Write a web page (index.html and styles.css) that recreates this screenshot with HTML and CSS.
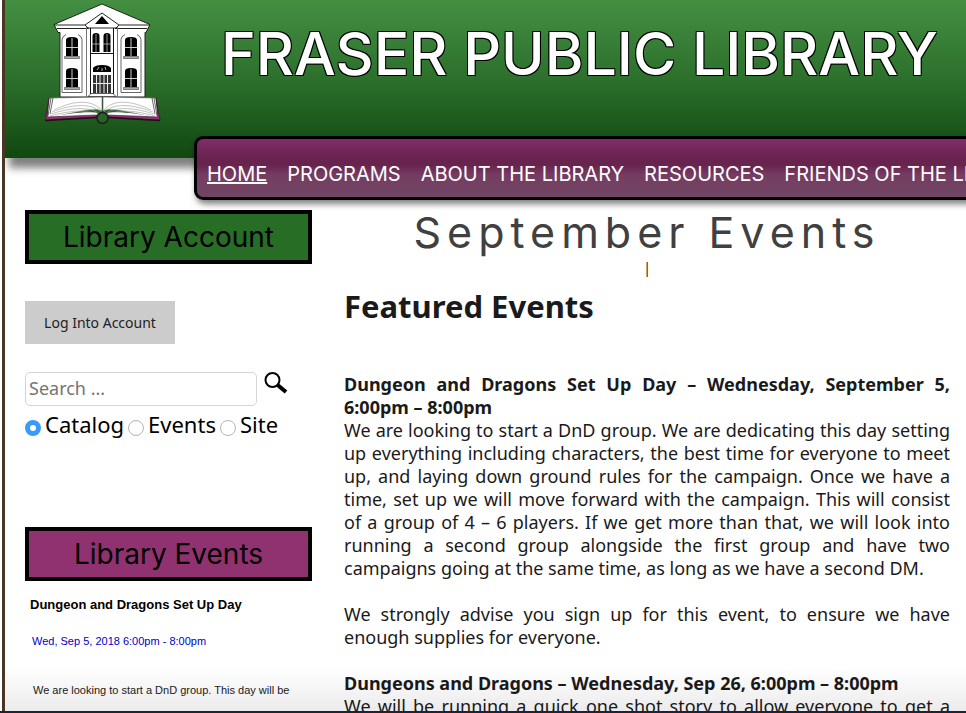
FILE: index.html
```html
<!DOCTYPE html>
<html lang="en">
<head>
<meta charset="utf-8">
<title>Fraser Public Library</title>
<link rel="stylesheet" href="styles.css">
</head>
<body>
<div class="page">
  <header class="masthead">
    <svg class="logo" viewBox="45 3 116 122" aria-hidden="true">
      <defs>
        <g id="window">
          <path d="M66 40q0-3 6-3t6 3v16h-12z" fill="#000"/>
          <path d="M72 38v18M66 47.500h12" stroke="#ccc" stroke-width="1"/>
          <path d="M64.500 56.500h15v2h-15z" fill="#aaa" stroke="#222" stroke-width=".5"/>
        </g>
        <g id="wing">
          <path d="M62 92.500v-53q0-3 4-5M82 92.500v-53q0-3-4-5M62 92.500h20" fill="none" stroke="#555" stroke-width=".9"/>
          <use href="#window"/>
          <use href="#window" y="31"/>
        </g>
        <g id="leaf">
          <path d="M49 98l53-1v14c-8-4-28 2-55 7z" fill="#fff" stroke="#555" stroke-width=".6"/>
          <path d="M51 98l-3 18M53 98l-3 16" stroke="#444" stroke-width=".8"/>
          <path d="M54 110c18-9 38-12 48 1M52 112c18-7 38-10 49 0M51 114c18-6 36-8 48-1M50 116c18-5 34-7 47-2" fill="none" stroke="#999" stroke-width=".6"/>
          <path d="M47 117c20-3 40-6 50-4l2 3-52 3z" fill="#fff"/>
          <path d="M49 98l-4 22 52-3v-2l-50 2z" fill="#943272" stroke="#301025" stroke-width=".6"/>
          <path d="M45 120.500l52-3" stroke="#260d1d" stroke-width="1.400"/>
        </g>
      </defs>
      <path d="M102 4L54 24.500l4 8h2V97h85V32.500h1l4-8z" fill="#fff" stroke="#222" stroke-width="1"/>
      <path d="M54 25h31M119 25h31M57 28.500h32M115 28.500h32" stroke="#222" stroke-width="1"/>
      <path d="M86.500 27v70M117.500 27v70" stroke="#777" stroke-width="1"/>
      <path d="M102 13L85 25l3 3h28l3-3z" fill="#fff" stroke="#222" stroke-width="1"/>
      <path d="M102 16L95 24h14z" fill="#000"/>
      <path d="M90.500 28v68M113.500 28v68M91 53.500h22" stroke="#111"/>
      <path d="M92.500 52V36q0-3 3.500-3t3.500 3v16zM103.500 52V36q0-3 3.500-3t3.500 3v16z" fill="#000"/>
      <path d="M96 34v18M107 34v18M92 44h8M103 44h8" stroke="#bbb" stroke-width=".8"/>
      <path d="M93 72v-4q2-3 9-3t9 3v4z" fill="#000"/>
      <path d="M97 70l2-3M102 71v-3M106 70l-1-3" stroke="#ddd" stroke-width=".8"/>
      <path d="M93 75h18v18H93z" fill="#333"/>
      <path d="M96.500 75v18M100 75v18M104 75v18M107.500 75v18M93 83.500h18" stroke="#eee" stroke-width="1"/>
      <path d="M88 96.500l3-3h22l3 3z" fill="#fff" stroke="#333" stroke-width=".8"/>
      <use href="#wing"/>
      <use href="#wing" x="59"/>
      <use href="#leaf"/>
      <use href="#leaf" transform="matrix(-1 0 0 1 205 0)"/>
      <circle cx="102.500" cy="118" r="5.500" fill="#256628" stroke="#2b1525" stroke-width="1.500"/>
    </svg>
    <h1 class="site-title">FRASER PUBLIC LIBRARY</h1>
  </header>
  <nav class="menu">
    <a class="current" href="#">HOME</a>
    <a href="#">PROGRAMS</a>
    <a href="#">ABOUT THE LIBRARY</a>
    <a href="#">RESOURCES</a>
    <a href="#">FRIENDS OF THE LIBRARY</a>
  </nav>
  <div class="columns">
    <aside class="sidebar">
      <h2 class="banner">Library Account</h2>
      <button class="login" type="button">Log Into Account</button>
      <form class="search">
        <div class="search-row">
          <input class="search-box" type="text" placeholder="Search ..." aria-label="Search">
          <button class="search-go" type="button" aria-label="Go">
            <svg viewBox="0 0 24 22" width="24" height="22"><circle cx="8.500" cy="8" r="7" fill="none" stroke="#000" stroke-width="2"/><path d="M13 12.500L22 20" stroke="#000" stroke-width="4"/></svg>
          </button>
        </div>
        <div class="scopes">
          <input type="radio" name="scope" id="catalog" checked><label for="catalog">Catalog</label>
          <input type="radio" name="scope" id="events"><label for="events">Events</label>
          <input type="radio" name="scope" id="site"><label for="site">Site</label>
        </div>
      </form>
      <h2 class="banner events">Library Events</h2>
      <div class="feed">
        <h3>Dungeon and Dragons Set Up Day</h3>
        <a href="#">Wed, Sep 5, 2018 6:00pm - 8:00pm</a>
        <p>We are looking to start a DnD group. This day will be</p>
      </div>
    </aside>
    <main class="content">
      <h2 class="month">September Events</h2>
      <div class="divider">|</div>
      <h3 class="featured">Featured Events</h3>
      <article>
        <h4>Dungeon and Dragons Set Up Day – Wednesday, September 5, 6:00pm – 8:00pm</h4>
        <p>We are looking to start a DnD group. We are dedicating this day setting up everything including characters, the best time for everyone to meet up, and laying down ground rules for the campaign. Once we have a time, set up we will move forward with the campaign. This will consist of a group of 4 – 6 players. If we get more than that, we will look into running a second group alongside the first group and have two campaigns going at the same time, as long as we have a second DM.</p>
        <p>We strongly advise you sign up for this event, to ensure we have enough supplies for everyone.</p>
      </article>
      <article>
        <h4>Dungeons and Dragons – Wednesday, Sep 26, 6:00pm – 8:00pm</h4>
        <p class="excerpt">We will be running a quick one shot story to allow everyone to get a</p>
      </article>
    </main>
  </div>
</div>
</body>
</html>
```
FILE: styles.css
```css
* { box-sizing: border-box; }
body, h1, h2, h3, h4, p { margin: 0; }

body {
  height: 100vh;
  overflow: hidden;
  padding-left: 2px;
  background: #fff;
  border-bottom: 2px solid #1b2436;
  font-family: "Noto Sans", sans-serif;
  color: #1a1a1a;
}

.page {
  position: relative;
  height: 100%;
  overflow: hidden;
  border-left: 3px solid #4a3623;
}

/* Soft shade along the bottom edge of the window */
.page::after {
  content: "";
  position: absolute;
  inset: auto 0 0 0;
  height: 44px;
  background: linear-gradient(rgba(0, 0, 0, 0), rgba(0, 0, 0, .08));
  pointer-events: none;
}

.masthead {
  display: flex;
  align-items: flex-start;
  gap: 60px;
  height: 158px;
  padding: 3px 0 0 40px;
  background: linear-gradient(#448f42, #2c702c 50%, #114711);
  box-shadow: 4px 10px 8px gray;
}

.logo { flex: none; width: 116px; height: 122px; }

.site-title {
  padding-top: 17px;
  font: 500 59px/68px Inter, sans-serif;
  white-space: nowrap;
  color: #fff;
  text-shadow: -1px -1px 0 #000, 1px -1px 0 #000, -1px 1px 0 #000, 1px 1px 0 #000;
}

.menu {
  position: relative;
  display: flex;
  gap: 20px;
  height: 64px;
  margin: -22px -20px 0 189px;
  padding: 21px 0 0 10px;
  overflow: hidden;
  border: 3px solid #000;
  border-radius: 9px;
  background: linear-gradient(#832d69, #68244e 32%, #68244e 45%, #763c62 62%, #704663);
  box-shadow: 2px 4px 6px rgba(0, 0, 0, .5);
  white-space: nowrap;
}

.menu a {
  font: 400 20px/28px Inter, sans-serif;
  color: #fff;
  text-decoration: none;
}

.menu .current { text-decoration: underline; text-decoration-thickness: 2px; }

.columns {
  display: grid;
  grid-template-columns: 287px 1fr;
  gap: 32px;
  padding: 0 16px 0 20px;
}

.sidebar { padding-top: 10px; }

.banner {
  height: 54px;
  border: 4px solid #000;
  background: #286d26;
  font: 400 28px/46px Inter, sans-serif;
  text-align: center;
  color: #000;
}

.events { background: #90326f; }

.login {
  display: block;
  width: 150px;
  height: 43px;
  margin: 37px 0 28px;
  padding: 0;
  border: 0;
  background: #ccc;
  font: 400 14px "Noto Sans", sans-serif;
  color: #222;
}

.search { height: 155px; }
.search-row { display: flex; align-items: flex-start; gap: 7px; }

.search-box {
  width: 232px;
  height: 34px;
  padding: 0 3px 2px;
  border: 1px solid #d5d5d5;
  border-radius: 5px;
  font: 400 18px "Noto Sans", sans-serif;
}

.search-box::placeholder { color: #757575; }
.search-go { padding: 0; border: 0; background: none; line-height: 0; }

.scopes {
  display: flex;
  align-items: center;
  gap: 4px;
  height: 36px;
  font-size: 22px;
  color: #000;
}

.scopes input {
  appearance: none;
  width: 16px;
  height: 16px;
  margin: 8px 0 0;
  border: 1px solid #b5b5b5;
  border-radius: 50%;
  background: #fff;
}

.scopes input:checked { border: 5px solid #3b99fc; }

.feed {
  padding: 14px 0 0 5px;
  font-family: "Liberation Sans", sans-serif;
}

.feed h3 { font-size: 13px; line-height: 20px; color: #000; }

.feed a {
  display: block;
  margin: 16px 0 0 2px;
  font-size: 11px;
  line-height: 20px;
  color: #00c;
  text-decoration: none;
}

.feed p { margin: 29px 0 0 3px; font-size: 11px; line-height: 20px; }

.month {
  font: 400 43px/64px Inter, sans-serif;
  letter-spacing: 6px;
  text-align: center;
  color: #404040;
}

.divider { font-size: 14px; line-height: 8px; text-align: center; }
.featured { margin-top: 14px; font-size: 31px; line-height: 40px; }

article { font-size: 18px; line-height: 23px; text-align: justify; }
article h4 { font-size: inherit; }
article p { margin-bottom: 23px; }
article .excerpt { text-align-last: justify; }
.featured + article { margin-top: 47px; }
```
